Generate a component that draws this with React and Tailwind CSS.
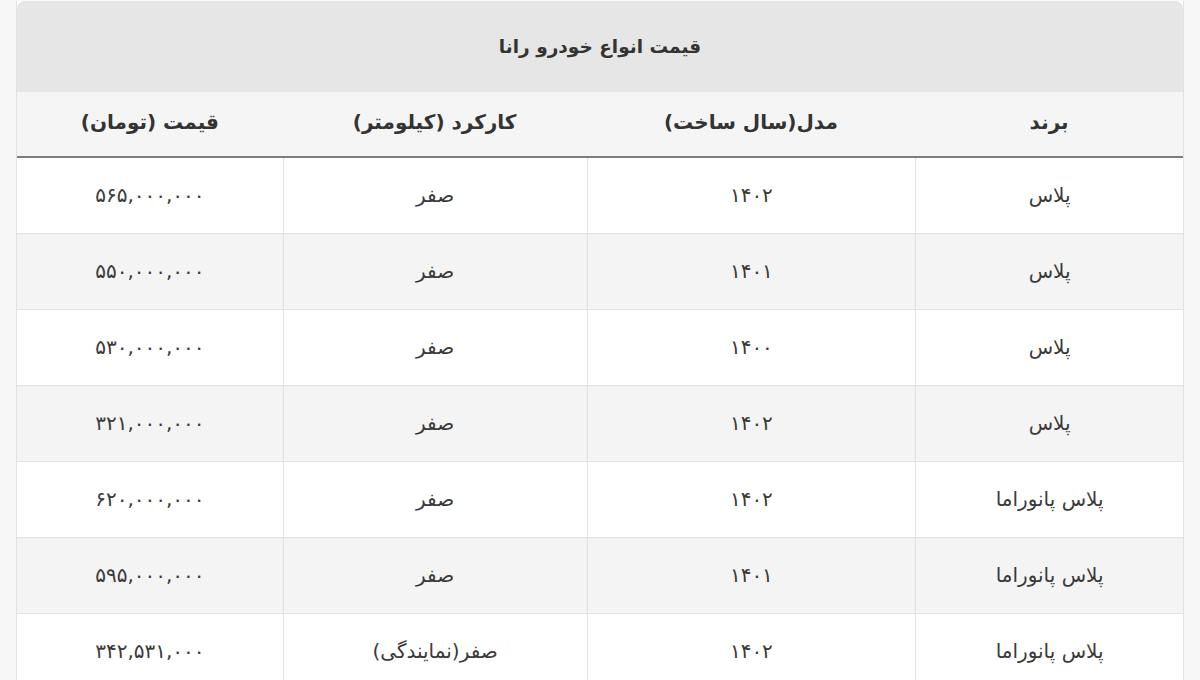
const ROWS = [
  { brand: 'پلاس', year: '۱۴۰۲', km: 'صفر', price: '۵۶۵,۰۰۰,۰۰۰' },
  { brand: 'پلاس', year: '۱۴۰۱', km: 'صفر', price: '۵۵۰,۰۰۰,۰۰۰' },
  { brand: 'پلاس', year: '۱۴۰۰', km: 'صفر', price: '۵۳۰,۰۰۰,۰۰۰' },
  { brand: 'پلاس', year: '۱۴۰۲', km: 'صفر', price: '۳۲۱,۰۰۰,۰۰۰' },
  { brand: 'پلاس پانوراما', year: '۱۴۰۲', km: 'صفر', price: '۶۲۰,۰۰۰,۰۰۰' },
  { brand: 'پلاس پانوراما', year: '۱۴۰۱', km: 'صفر', price: '۵۹۵,۰۰۰,۰۰۰' },
  { brand: 'پلاس پانوراما', year: '۱۴۰۲', km: 'صفر(نمایندگی)', price: '۳۴۲,۵۳۱,۰۰۰' },
];

const COLS = ['w-[268px]', 'w-[329px]', 'w-[304px]', 'w-[266px]'];

export default function App() {
  return (
    <div
      dir="rtl"
      className="h-[680px] w-[1200px] overflow-hidden bg-[#f7f7f7] px-[16px] pt-[1px] text-[#333]"
      style={{ fontFamily: '"DejaVu Sans", "Noto Sans", sans-serif' }}
    >
      <div className="border-x border-[#e2e2e2] bg-white">
        {/* Caption */}
        <div className="flex h-[91px] items-center justify-center rounded-t-lg bg-[#e6e6e6] text-[18.5px] font-bold">
          قیمت انواع خودرو رانا
        </div>

        {/* Header */}
        <div className="flex h-[66px] border-b-2 border-[#7d7d7d] bg-[#f5f5f5] text-[20px] font-bold">
          {['برند', 'مدل(سال ساخت)', 'کارکرد (کیلومتر)', 'قیمت (تومان)'].map((h, i) => (
            <div key={h} className={`${COLS[i]} flex items-center justify-center pb-[4px]`}>
              {h}
            </div>
          ))}
        </div>

        {/* Body */}
        {ROWS.map((r, idx) => (
          <div
            key={idx}
            className={`flex h-[76px] border-b border-[#e2e2e2] text-[20px] text-[#3a3a3a] ${idx % 2 === 1 ? 'bg-[#f4f4f4]' : 'bg-white'}`}
          >
            {[r.brand, r.year, r.km, r.price].map((v, i) => (
              <div
                key={i}
                className={`${COLS[i]} flex items-center justify-center pb-[2px] ${i < 3 ? 'border-l border-[#e2e2e2]' : ''}`}
              >
                {v}
              </div>
            ))}
          </div>
        ))}
      </div>
    </div>
  );
}
